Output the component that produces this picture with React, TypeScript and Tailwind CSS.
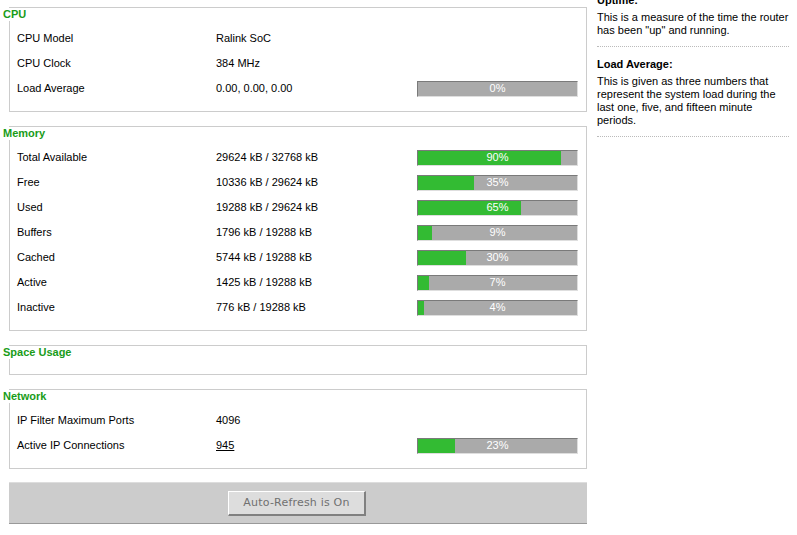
import React from "react";

type Row = { label: string; value: string; pct?: number; link?: boolean };

const font = { fontFamily: '"Liberation Sans", Arial, sans-serif' };

function Bar({ pct }: { pct: number }) {
  return (
    <div className="relative w-[161px] h-[16px] bg-[#aaaaaa] border-t border-l border-[#7a7a7a] border-b border-r border-b-[#dedede] border-r-[#dedede]">
      <div className="h-full bg-[#33bb33]" style={{ width: `${pct}%` }} />
      <div className="absolute inset-0 flex items-center justify-center text-white text-[11px] leading-none">
        {pct}%
      </div>
    </div>
  );
}

function Section({
  title,
  rows,
  mt,
  pb,
  empty,
}: {
  title: string;
  rows: Row[];
  mt: string;
  pb: string;
  empty?: boolean;
}) {
  return (
    <div className={`${mt} border-t border-r border-b border-[#cccccc]`}>
      <div className="-ml-[6px] h-[13px] leading-[13px] text-[11px] font-bold text-[#199c19]">
        {title}
      </div>
      <div className={`border-l border-[#cccccc] ${empty ? "h-[15px]" : `pt-[5px] ${pb}`}`}>
        {rows.map((r) => (
          <div key={r.label} className="flex items-center h-[25px] text-[11px] text-black">
            <div className="w-[206px] pl-[7px]">{r.label}</div>
            <div className="w-[201px]">
              {r.link ? <span className="underline">{r.value}</span> : r.value}
            </div>
            {r.pct !== undefined && <Bar pct={r.pct} />}
          </div>
        ))}
      </div>
    </div>
  );
}

export default function App() {
  const cpu: Row[] = [
    { label: "CPU Model", value: "Ralink SoC" },
    { label: "CPU Clock", value: "384 MHz" },
    { label: "Load Average", value: "0.00, 0.00, 0.00", pct: 0 },
  ];
  const mem: Row[] = [
    { label: "Total Available", value: "29624 kB / 32768 kB", pct: 90 },
    { label: "Free", value: "10336 kB / 29624 kB", pct: 35 },
    { label: "Used", value: "19288 kB / 29624 kB", pct: 65 },
    { label: "Buffers", value: "1796 kB / 19288 kB", pct: 9 },
    { label: "Cached", value: "5744 kB / 19288 kB", pct: 30 },
    { label: "Active", value: "1425 kB / 19288 kB", pct: 7 },
    { label: "Inactive", value: "776 kB / 19288 kB", pct: 4 },
  ];
  const net: Row[] = [
    { label: "IP Filter Maximum Ports", value: "4096" },
    { label: "Active IP Connections", value: "945", pct: 23, link: true },
  ];

  return (
    <div className="w-[797px] h-[535px] overflow-hidden bg-white flex" style={font}>
      <div className="w-[587px] pl-[9px] pt-[7px] shrink-0">
        <Section title="CPU" rows={cpu} mt="mt-0" pb="pb-[10px]" />
        <Section title="Memory" rows={mem} mt="mt-[14px]" pb="pb-[10px]" />
        <Section title="Space Usage" rows={[]} mt="mt-[14px]" pb="" empty />
        <Section title="Network" rows={net} mt="mt-[14px]" pb="pb-[10px]" />
        <div className="mt-[13px] h-[42px] bg-[#cccccc] border-t border-t-[#dddddd] border-b border-b-[#999999]">
          <div className="ml-[219px] mt-[8px] w-[138px] h-[25px] bg-[#dddddd] border-t border-l border-white border-b-2 border-r-2 border-b-[#808080] border-r-[#808080] flex items-center justify-center text-[11px] text-[#707070] tracking-[0.2px]" style={{ fontFamily: '"DejaVu Sans", Verdana, sans-serif' }}>
            Auto-Refresh is On
          </div>
        </div>
      </div>
      <div className="ml-[10px] w-[192px] -mt-[17px] text-[11px] leading-[13px] text-black">
        <div className="pt-[11px] pb-[9px] border-b border-dotted border-[#bbbbbb]">
          <div className="font-bold">Uptime:</div>
          <div className="mt-[4px]">This is a measure of the time the router has been "up" and running.</div>
        </div>
        <div className="pt-[11px] pb-[9px] border-b border-dotted border-[#bbbbbb]">
          <div className="font-bold">Load Average:</div>
          <div className="mt-[4px]">
            This is given as three numbers that represent the system load during the last one, five, and fifteen minute periods.
          </div>
        </div>
      </div>
    </div>
  );
}
